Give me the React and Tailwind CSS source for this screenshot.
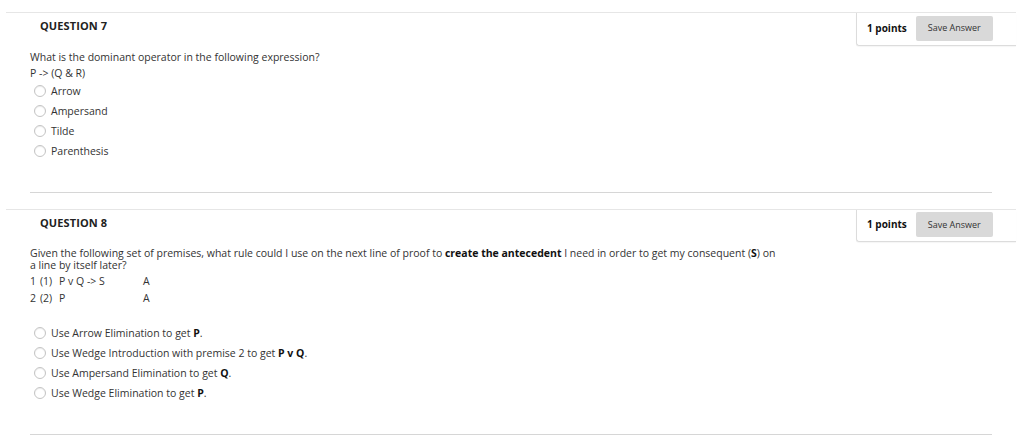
const font = { fontFamily: '"Open Sans", "Liberation Sans", sans-serif' }

function Radio({ children }) {
  return (
    <div className="flex items-center h-[20px]">
      <span className="ml-[4px] w-[12px] h-[12px] rounded-full border border-[#c4c4c4] bg-white shadow-[inset_0_1px_1px_rgba(0,0,0,0.08)]" />
      <span className="ml-[5px] text-[10.5px] leading-[20px] text-[#333]">{children}</span>
    </div>
  )
}

function Header({ title, h }) {
  return (
    <div className="flex justify-between">
      <div className="pl-[34px] pt-[5px] text-[11px] leading-[16px] font-bold text-[#222] tracking-[0.01em]">
        {title}
      </div>
      <div
        className={`${h} w-[160px] flex items-center pb-[2px] border-l border-b border-[#dcdcdc] rounded-bl-[3px] shadow-[0_1px_1px_rgba(0,0,0,0.04)]`}
      >
        <span className="ml-[10px] text-[10px] font-bold text-[#111]">1 points</span>
        <button className="ml-[9px] w-[77px] h-[25px] bg-[#d9d9d9] rounded-[2px] text-[9px] text-[#333]">
          Save Answer
        </button>
      </div>
    </div>
  )
}

export default function App() {
  return (
    <div className="w-[1024px] h-[446px] bg-white overflow-hidden pt-[12px]" style={font}>
      {/* question 7 */}
      <div className="ml-[6px] w-[1010px] border-t border-[#e6e6e6]">
        <Header title="QUESTION 7" h="h-[33px]" />
        <div className="pl-[24px] pt-[3px]">
          <div className="text-[10.5px] leading-[16px] text-[#333]">
            What is the dominant operator in the following expression?
          </div>
          <div className="text-[10.5px] leading-[16px] text-[#333]">P -&gt; (Q &amp; R)</div>
          {['Arrow', 'Ampersand', 'Tilde', 'Parenthesis'].map((o) => (
            <Radio key={o}>{o}</Radio>
          ))}
          <div className="mt-[31px] w-[962px] h-px bg-[#d6d6d6]" />
        </div>
      </div>

      {/* question 8 */}
      <div className="mt-[16px] ml-[6px] w-[1010px] border-t border-[#e6e6e6]">
        <Header title="QUESTION 8" h="h-[32px]" />
        <div className="pl-[24px] pt-[5px]">
          <div className="w-[752px] text-[10.5px] leading-[12px] text-[#333]">
            Given the following set of premises, what rule could I use on the next line of proof to{' '}
            <b className="text-[#111]">create the antecedent</b> I need in order to get my consequent (
            <b className="text-[#111]">S</b>) on a line by itself later?
          </div>
          <div className="mt-[2px] grid grid-cols-[10px_19px_84px_auto] text-[10.5px] leading-[17px] text-[#333]">
            <span>1</span>
            <span>(1)</span>
            <span>P v Q -&gt; S</span>
            <span>A</span>
            <span>2</span>
            <span>(2)</span>
            <span>P</span>
            <span>A</span>
          </div>
          <div className="mt-[16px]">
            <Radio>
              Use Arrow Elimination to get <b className="text-[#111]">P</b>.
            </Radio>
            <Radio>
              Use Wedge Introduction with premise 2 to get <b className="text-[#111]">P v Q</b>.
            </Radio>
            <Radio>
              Use Ampersand Elimination to get <b className="text-[#111]">Q</b>.
            </Radio>
            <Radio>
              Use Wedge Elimination to get <b className="text-[#111]">P</b>.
            </Radio>
          </div>
          <div className="mt-[31px] w-[962px] h-px bg-[#d6d6d6]" />
        </div>
      </div>
    </div>
  )
}
